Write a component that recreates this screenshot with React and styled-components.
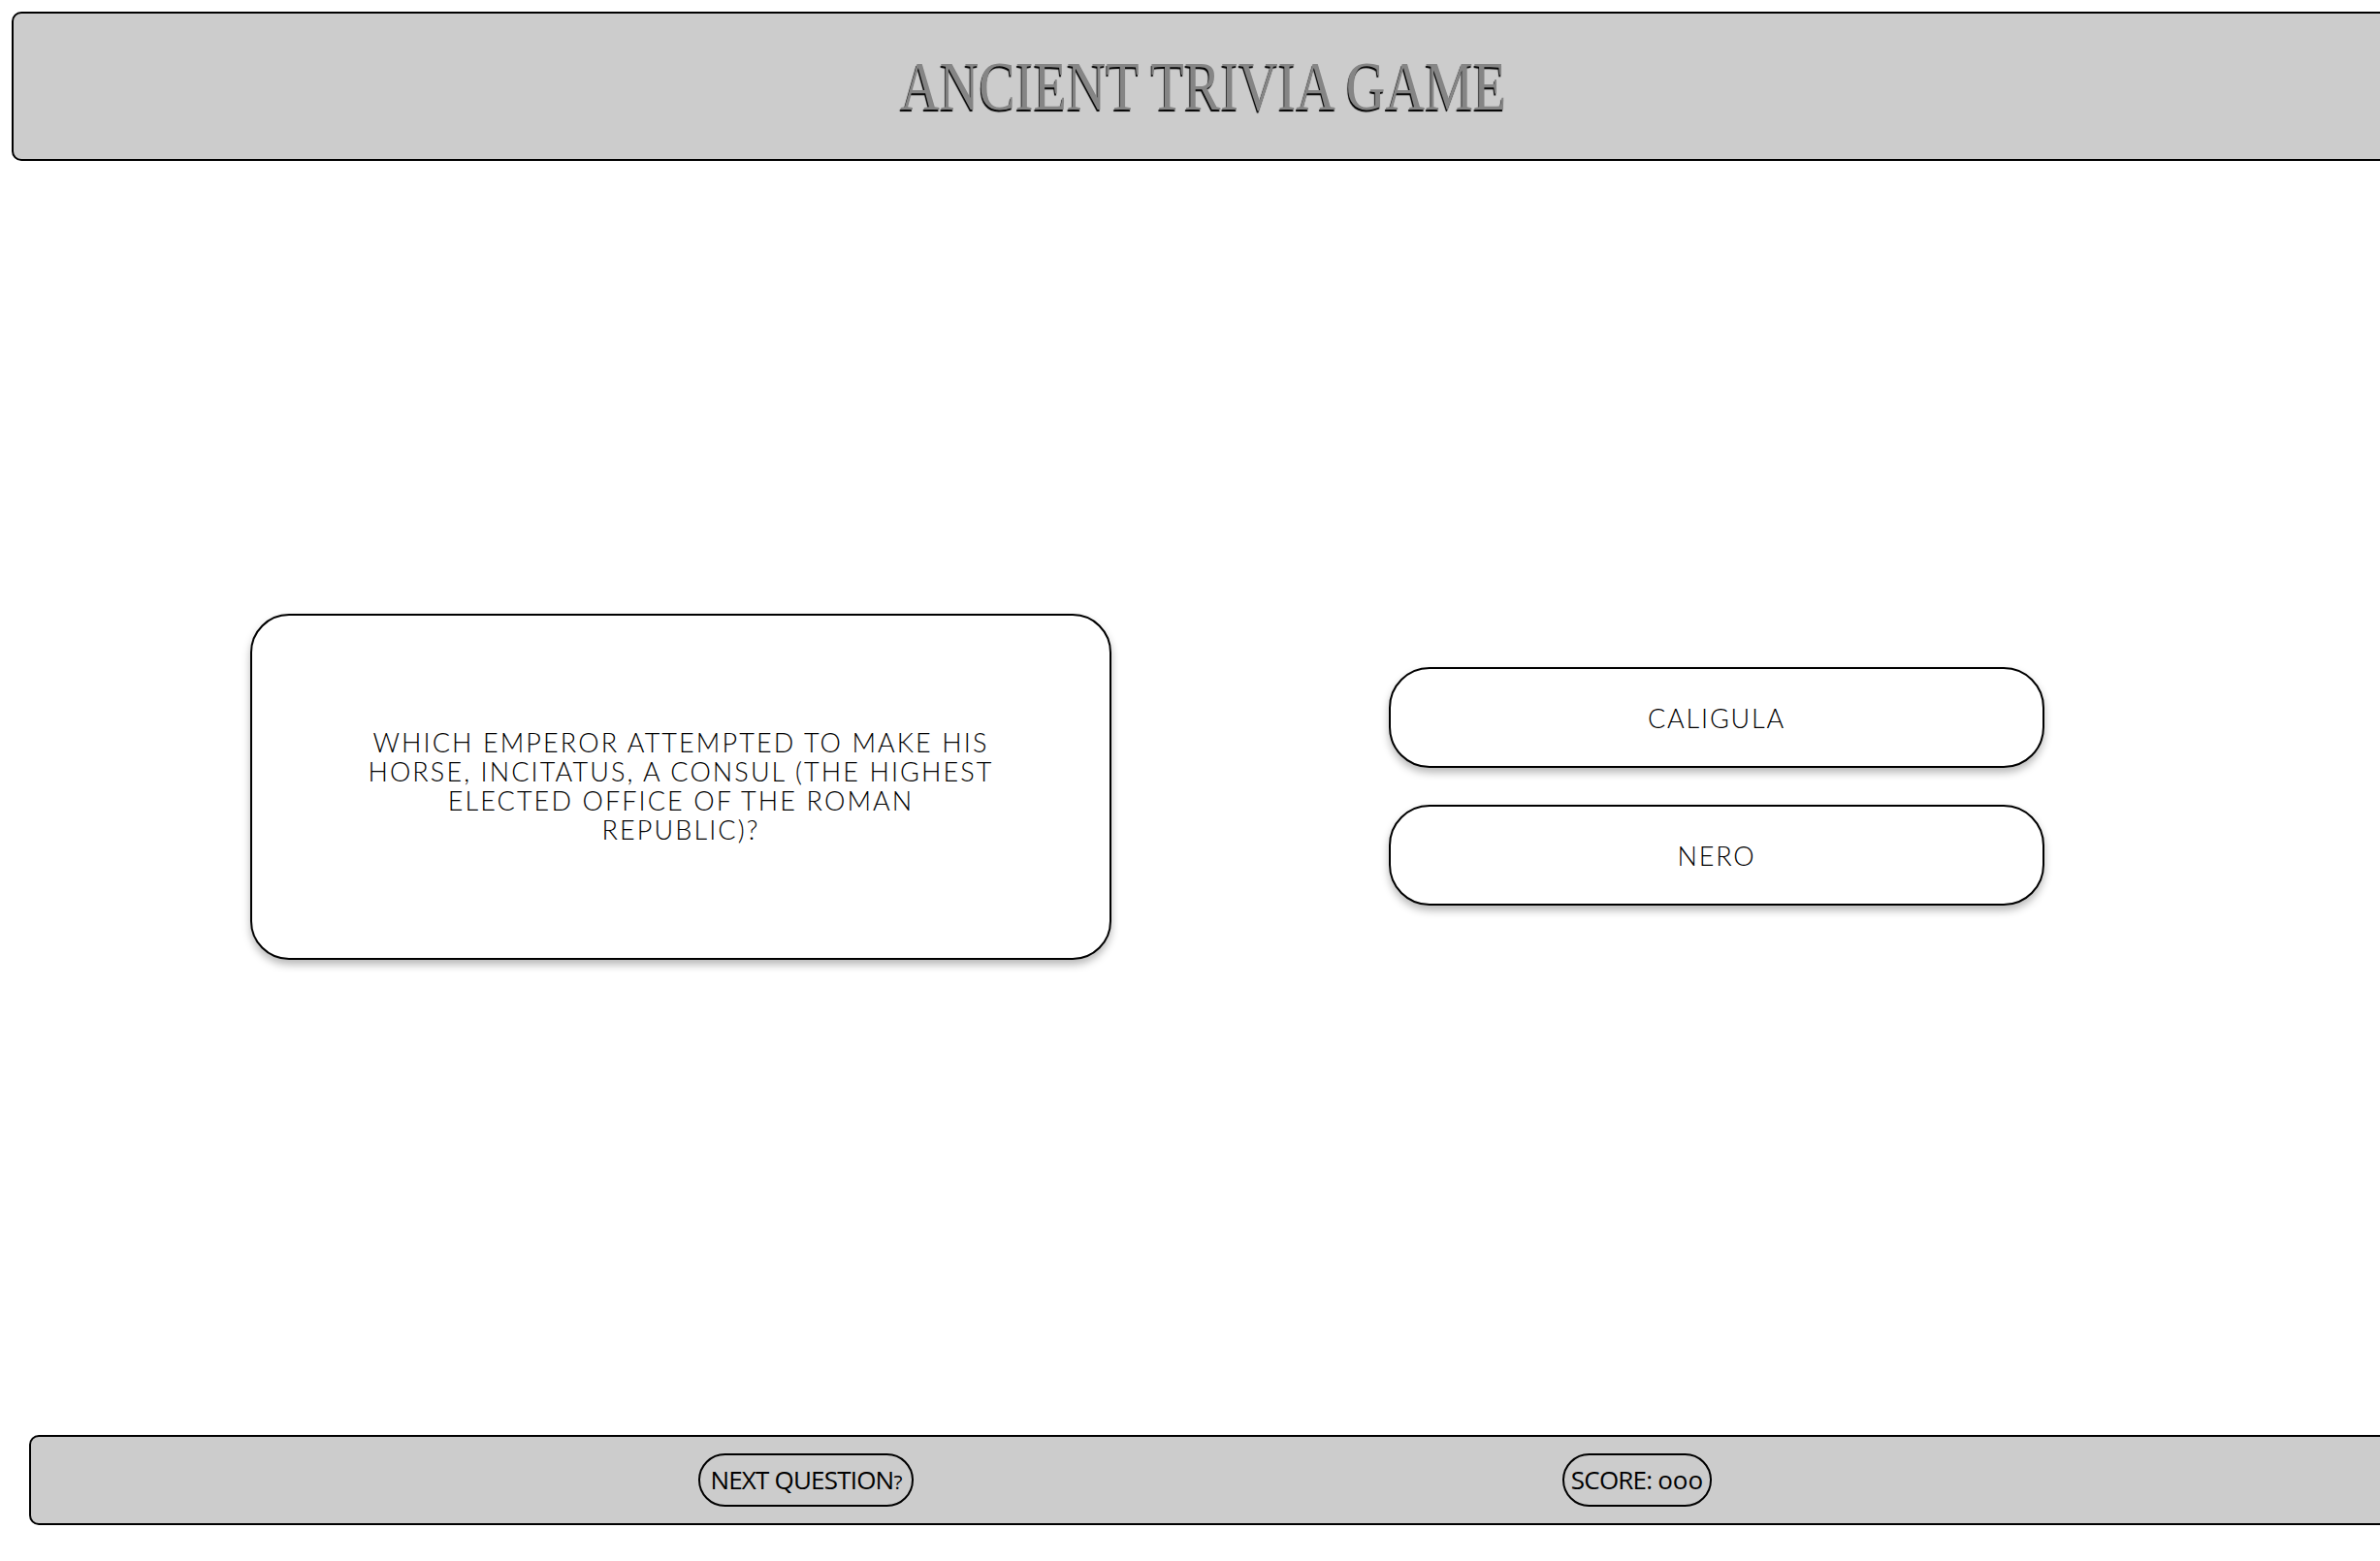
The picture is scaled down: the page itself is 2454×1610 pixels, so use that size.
import React from "react";
import styled, { createGlobalStyle } from "styled-components";

const Global = createGlobalStyle`
  html, body {
    margin: 0;
    padding: 0;
    overflow: hidden;
    background: #ffffff;
  }
  * { box-sizing: border-box; }
`;

const Page = styled.div`
  width: 100vw;
  height: 100vh;
  padding: 12px 0 37px 12px;
  display: flex;
  flex-direction: column;
  overflow: hidden;
`;

const Header = styled.header`
  flex: 0 0 154px;
  margin-right: -16px;
  background: #cccccc;
  border: 2px solid #000;
  border-radius: 10px;
  display: flex;
  align-items: center;
  justify-content: center;
`;

const Title = styled.h1`
  margin: 0;
  display: inline-block;
  font-family: "Liberation Serif", "DejaVu Serif", serif;
  font-weight: 400;
  font-size: 72px;
  line-height: 1;
  color: #858585;
  text-shadow: -1px 2px 1px #000;
  transform: scaleX(0.78);
  white-space: nowrap;
`;

const Main = styled.main`
  flex: 1;
  display: flex;
  align-items: center;
  padding-left: 246px;
  padding-bottom: 24px;
  gap: 286px;
`;

const QuestionCard = styled.section`
  width: 888px;
  height: 357px;
  border: 2px solid #000;
  border-radius: 40px;
  background: #fff;
  box-shadow: 0 5px 8px rgba(0, 0, 0, 0.28);
  display: flex;
  align-items: center;
  justify-content: center;
  padding: 0 80px;
`;

const QuestionText = styled.p`
  margin: 0;
  width: 649px;
  text-align: center;
  font-family: "Lato", "Open Sans", sans-serif;
  font-weight: 300;
  font-size: 27px;
  line-height: 30px;
  letter-spacing: 2.1px;
  text-transform: uppercase;
  color: #000;
`;

const Answers = styled.div`
  display: flex;
  flex-direction: column;
  gap: 38px;
`;

const AnswerButton = styled.button`
  width: 676px;
  height: 104px;
  border: 2px solid #000;
  border-radius: 42px;
  background: #fff;
  box-shadow: 0 5px 8px rgba(0, 0, 0, 0.28);
  font-family: "Lato", "Open Sans", sans-serif;
  font-weight: 300;
  font-size: 27px;
  letter-spacing: 1.8px;
  text-transform: uppercase;
  color: #000;
  cursor: pointer;
  padding: 0;
`;

const Footer = styled.footer`
  flex: 0 0 93px;
  margin-left: 18px;
  margin-right: -16px;
  background: #cccccc;
  border: 2px solid #000;
  border-radius: 10px;
  display: flex;
  align-items: center;
  padding-left: 688px;
  gap: 669px;
`;

const FooterButton = styled.button`
  height: 55px;
  width: ${(p) => p.$w}px;
  border: 2px solid #000;
  border-radius: 28px;
  background: transparent;
  font-family: "Open Sans", "Lato", sans-serif;
  font-weight: 400;
  font-size: 26px;
  line-height: 51px;
  letter-spacing: -0.8px;
  color: #000;
  padding: 0;
  white-space: nowrap;
  text-align: center;
  cursor: pointer;
`;

const Small = styled.span`
  font-size: 0.8em;
`;

const OldNums = styled.span`
  letter-spacing: 0;
`;

export default function App() {
  return (
    <>
      <Global />
      <Page>
        <Header>
          <Title>ANCIENT TRIVIA GAME</Title>
        </Header>
        <Main>
          <QuestionCard>
            <QuestionText>
              Which emperor attempted to make his horse, Incitatus, a consul (the
              highest elected office of the Roman Republic)?
            </QuestionText>
          </QuestionCard>
          <Answers>
            <AnswerButton>Caligula</AnswerButton>
            <AnswerButton>Nero</AnswerButton>
          </Answers>
        </Main>
        <Footer>
          <FooterButton $w={222}>
            NEXT QUESTION<Small>?</Small>
          </FooterButton>
          <FooterButton $w={154}>
            {"SCORE: "}
            <OldNums>ooo</OldNums>
          </FooterButton>
        </Footer>
      </Page>
    </>
  );
}
